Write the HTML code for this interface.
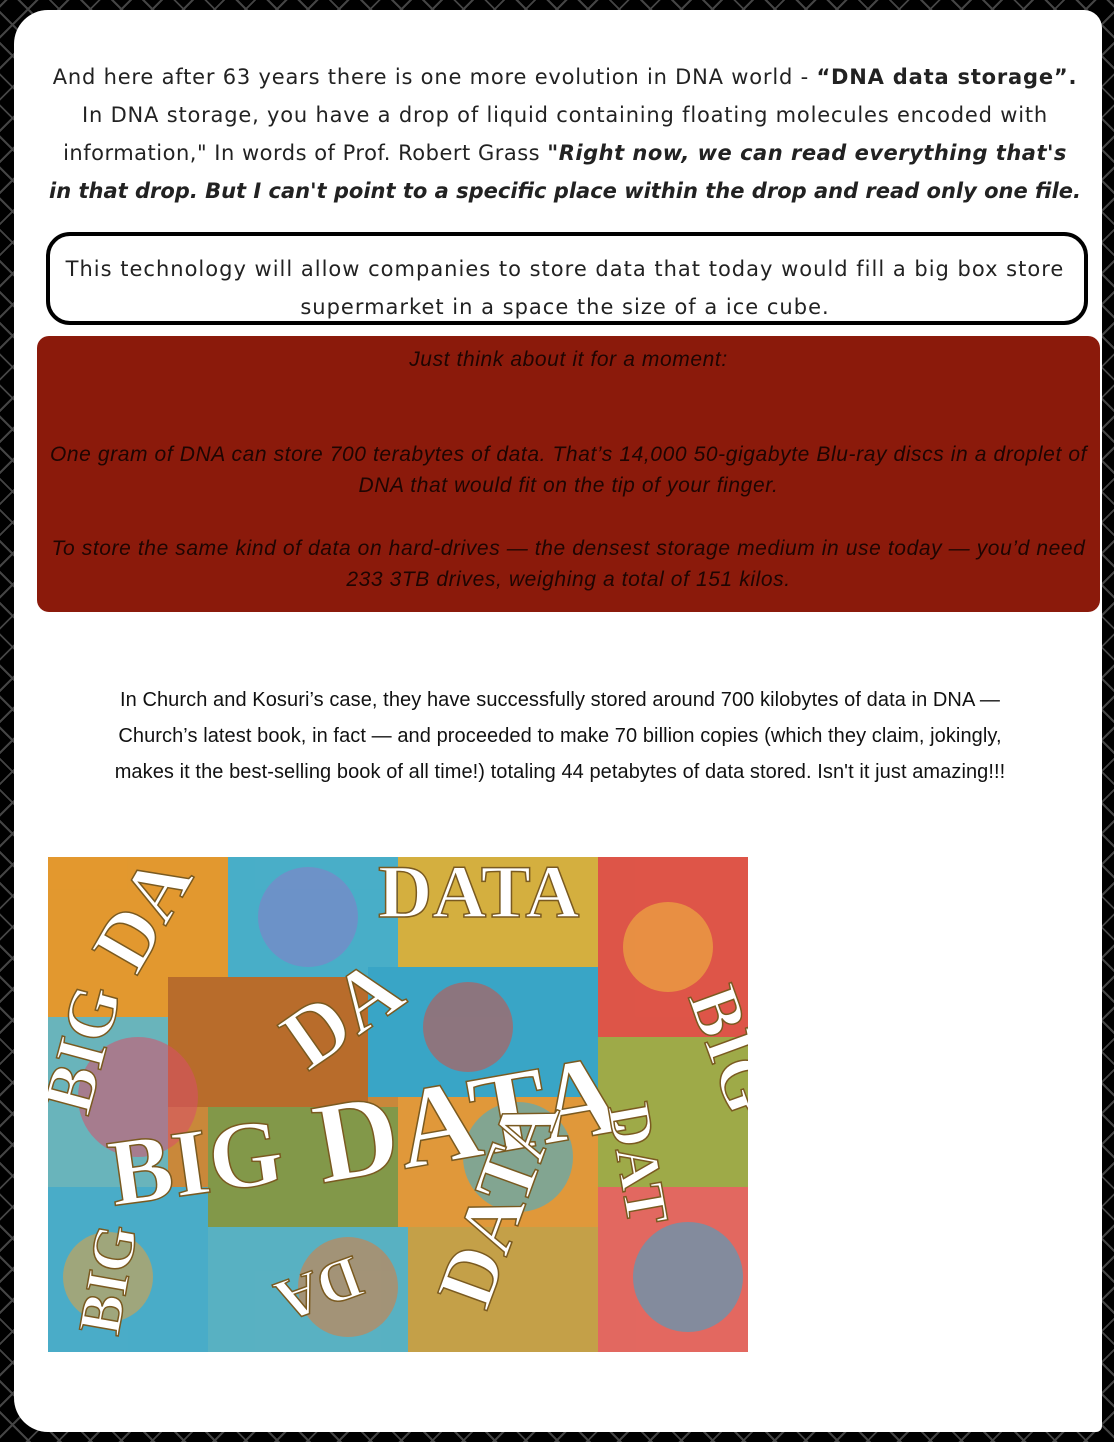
<!DOCTYPE html>
<html><head><meta charset="utf-8"><style>
html,body{margin:0;padding:0;}
body{width:1114px;height:1442px;position:relative;overflow:hidden;background:#000;
background-image:repeating-linear-gradient(45deg,transparent 0 20px,#444 20px 22px),repeating-linear-gradient(-45deg,transparent 0 20px,#444 20px 22px);}
.card{position:absolute;left:14px;top:10px;width:1088px;height:1422px;background:#fff;border-radius:34px 18px 6px 34px;}
.p1{position:absolute;left:20px;width:1090px;top:58px;text-align:center;font-family:"DejaVu Sans",sans-serif;font-size:21px;line-height:38px;color:#222;letter-spacing:0.8px;white-space:nowrap;}
.box{position:absolute;left:46px;top:232px;width:1034px;height:85px;border:4px solid #000;border-radius:24px;}
.p2{position:absolute;left:20px;width:1090px;top:250px;text-align:center;font-family:"DejaVu Sans",sans-serif;font-size:21px;line-height:38px;color:#222;letter-spacing:1px;white-space:nowrap;}
.red{position:absolute;left:37px;top:336px;width:1063px;height:276px;background:#8b1a0b;border-radius:12px;}
.rt{position:absolute;left:37px;width:1063px;text-align:center;font-family:"Liberation Sans",sans-serif;font-style:italic;font-size:21px;line-height:31px;color:#1e0502;white-space:nowrap;letter-spacing:0.6px;}
.hw{position:absolute;left:60px;width:1000px;top:682px;text-align:center;font-family:"Liberation Sans",sans-serif;font-size:20px;line-height:36px;color:#111;letter-spacing:0.08px;white-space:nowrap;}
.img{position:absolute;left:48px;top:857px;width:700px;height:495px;overflow:hidden;}
</style></head><body>
<div class="card"></div>
<div class="p1">And here after 63 years there is one more evolution in DNA world - <b>“DNA data storage”.</b><br>In DNA storage, you have a drop of liquid containing floating molecules encoded with<br><span style="letter-spacing:0.5px">information," In words of Prof. Robert Grass <b><i>"Right now, we can read everything that's</i></b></span><br><b><i style="letter-spacing:0px">in that drop. But I can't point to a specific place within the drop and read only one file.</i></b></div>
<div class="box"></div>
<div class="p2">This technology will allow companies to store data that today would fill a big box store<br>supermarket in a space the size of a ice cube.</div>
<div class="red"></div>
<div class="rt" style="top:344px">Just think about it for a moment:</div>
<div class="rt" style="top:439px">One gram of DNA can store 700 terabytes of data. That’s 14,000 50-gigabyte Blu-ray discs in a droplet of<br>DNA that would fit on the tip of your finger.</div>
<div class="rt" style="top:533px">To store the same kind of data on hard-drives — the densest storage medium in use today — you’d need<br>233 3TB drives, weighing a total of 151 kilos.</div>
<div class="hw">In Church and Kosuri’s case, they have successfully stored around 700 kilobytes of data in DNA —<br>Church’s latest book, in fact — and proceeded to make 70 billion copies (which they claim, jokingly,<br>makes it the best-selling book of all time!) totaling 44 petabytes of data stored. Isn't it just amazing!!!</div>
<div class="img"><svg width="700" height="495" viewBox="0 0 700 495">
<rect width="700" height="495" fill="#c9883a"/>
<g opacity="0.9">
<rect x="0" y="0" width="180" height="160" fill="#e59a2e"/>
<rect x="180" y="0" width="170" height="120" fill="#3bb3d8"/>
<rect x="350" y="0" width="200" height="110" fill="#d6b440"/>
<rect x="550" y="0" width="150" height="180" fill="#e0504a"/>
<rect x="0" y="160" width="120" height="170" fill="#5fb9c9"/>
<rect x="120" y="120" width="200" height="130" fill="#b76a2a"/>
<rect x="320" y="110" width="230" height="130" fill="#2aa9d6"/>
<rect x="550" y="180" width="150" height="150" fill="#9aae4a"/>
<rect x="0" y="330" width="160" height="165" fill="#3cb0d8"/>
<rect x="160" y="250" width="190" height="120" fill="#7b9a4b"/>
<rect x="350" y="240" width="200" height="130" fill="#e39a3a"/>
<rect x="550" y="330" width="150" height="165" fill="#e56565"/>
<rect x="160" y="370" width="200" height="125" fill="#4cb6d1"/>
<rect x="360" y="370" width="190" height="125" fill="#c4a34a"/>
</g>
<g opacity="0.55">
<circle cx="90" cy="240" r="60" fill="#d94f6a"/><circle cx="260" cy="60" r="50" fill="#8b7cc8"/>
<circle cx="470" cy="300" r="55" fill="#36b1d8"/><circle cx="620" cy="90" r="45" fill="#f0c040"/>
<circle cx="300" cy="430" r="50" fill="#e07a3a"/><circle cx="640" cy="420" r="55" fill="#34a8d0"/>
<circle cx="60" cy="420" r="45" fill="#e6a23e"/><circle cx="420" cy="170" r="45" fill="#d24e44"/>
</g>
<g font-family="Liberation Serif,serif" font-weight="bold" fill="#fff" stroke="#7a5a20" stroke-width="1.5">
<text x="60" y="335" font-size="95" transform="rotate(-8 160 300)">BIG</text>
<text x="265" y="300" font-size="115" transform="rotate(-10 420 260)">DATA</text>
<text x="230" y="180" font-size="85" transform="rotate(-35 300 150)">DA</text>
<text x="330" y="60" font-size="75">DATA</text>
<text x="60" y="90" font-size="80" transform="rotate(-60 100 80)">DA</text>
<text x="640" y="140" font-size="70" transform="rotate(70 640 140)">BIG</text>
<text x="560" y="250" font-size="60" transform="rotate(80 560 250)">DAT</text>
<text x="40" y="260" font-size="70" transform="rotate(-75 40 260)">BIG</text>
<text x="400" y="440" font-size="80" transform="rotate(-70 430 420)">DATA</text>
<text x="240" y="370" font-size="60" transform="rotate(160 270 390)">DA</text>
<text x="70" y="480" font-size="60" transform="rotate(-80 70 480)">BIG</text>
</g>
</svg></div>
</body></html>
